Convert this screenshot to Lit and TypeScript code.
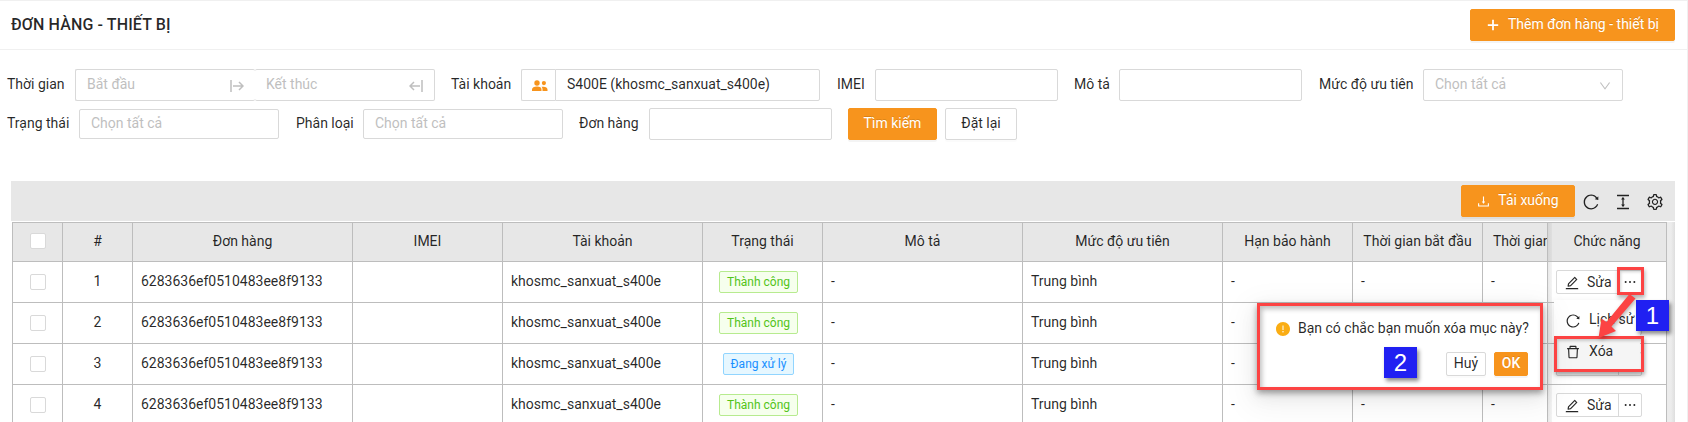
import { LitElement, html, css, svg } from "lit";
import { customElement, property } from "lit/decorators.js";

const ICONS: Record<string, string> = {
  reload:
    "M909.1 209.3l-56.4 44.1C775.8 155.1 656.2 92 521.9 92 290 92 102.3 279.5 102 511.5 101.7 743.7 289.8 932 521.9 932c181.3 0 335.8-115 394.6-276.1 1.5-4.2-.7-8.9-4.9-10.3l-56.7-19.5a8 8 0 00-10.1 4.8c-1.8 5-3.8 10-5.9 14.9-17.3 41-42.1 77.8-73.7 109.4A344.77 344.77 0 01655.9 829c-42.3 17.9-87.4 27-133.8 27-46.5 0-91.5-9.1-133.8-27A341.5 341.5 0 01279 755.2a342.16 342.16 0 01-73.7-109.4c-17.9-42.4-27-87.4-27-133.9s9.1-91.5 27-133.9c17.3-41 42.1-77.8 73.7-109.4 31.6-31.6 68.4-56.4 109.3-73.8 42.3-17.9 87.4-27 133.8-27 46.5 0 91.5 9.1 133.8 27a341.5 341.5 0 01109.3 73.8c9.9 9.9 19.2 20.4 27.8 31.4l-60.2 47a8 8 0 003 14.1l175.6 43c5 1.2 9.9-2.6 9.9-7.7l.8-180.9c-.1-6.6-7.8-10.3-13-6.2z",
  setting:
    "M924.8 625.7l-65.5-56c3.1-19 4.7-38.4 4.7-57.8s-1.6-38.8-4.7-57.8l65.5-56a32.03 32.03 0 009.3-35.2l-.9-2.6a443.74 443.74 0 00-79.7-137.9l-1.8-2.1a32.12 32.12 0 00-35.1-9.5l-81.3 28.9c-30-24.6-63.5-44-99.7-57.6l-15.7-85a32.05 32.05 0 00-25.8-25.7l-2.7-.5c-52.1-9.4-106.9-9.4-159 0l-2.7.5a32.05 32.05 0 00-25.8 25.7l-15.8 85.4a351.86 351.86 0 00-99 57.4l-81.9-29.1a32 32 0 00-35.1 9.5l-1.8 2.1a446.02 446.02 0 00-79.7 137.9l-.9 2.6c-4.5 12.5-.8 26.5 9.3 35.2l66.3 56.6c-3.1 18.8-4.6 38-4.6 57.1 0 19.2 1.5 38.4 4.6 57.1L99 625.5a32.03 32.03 0 00-9.3 35.2l.9 2.6c18.1 50.4 44.9 96.9 79.7 137.9l1.8 2.1a32.12 32.12 0 0035.1 9.5l81.9-29.1c29.8 24.5 63.1 43.9 99 57.4l15.8 85.4a32.05 32.05 0 0025.8 25.7l2.7.5a449.4 449.4 0 00159 0l2.7-.5a32.05 32.05 0 0025.8-25.7l15.7-85a350 350 0 0099.7-57.6l81.3 28.9a32 32 0 0035.1-9.5l1.8-2.1c34.8-41.1 61.6-87.5 79.7-137.9l.9-2.6c4.5-12.3.8-26.3-9.3-35zM788.3 465.9c2.5 15.1 3.8 30.6 3.8 46.1s-1.3 31-3.8 46.1l-6.6 40.1 74.7 63.9a370.03 370.03 0 01-42.6 73.6L721 702.8l-31.4 25.8c-23.9 19.6-50.5 35-79.3 45.8l-38.1 14.3-17.9 97a377.5 377.5 0 01-85 0l-17.9-97.2-37.8-14.5c-28.5-10.8-55-26.2-78.7-45.7l-31.4-25.9-93.4 33.2c-17-22.9-31.2-47.6-42.6-73.6l75.5-64.5-6.5-40c-2.4-14.9-3.7-30.3-3.7-45.5 0-15.3 1.2-30.6 3.7-45.5l6.5-40-75.5-64.5c11.3-26.1 25.6-50.7 42.6-73.6l93.4 33.2 31.4-25.9c23.7-19.5 50.2-34.9 78.7-45.7l37.9-14.3 17.9-97.2c28.1-3.2 56.8-3.2 85 0l17.9 97 38.1 14.3c28.7 10.8 55.4 26.2 79.3 45.8l31.4 25.8 92.8-32.9c17 22.9 31.2 47.6 42.6 73.6L781.8 426l6.5 39.9zM512 326c-97.2 0-176 78.8-176 176s78.8 176 176 176 176-78.8 176-176-78.8-176-176-176zm79.2 255.2A111.6 111.6 0 01512 614c-29.9 0-58-11.7-79.2-32.8A111.6 111.6 0 01400 502c0-29.9 11.7-58 32.8-79.2C454 401.6 482.1 390 512 390c29.9 0 58 11.6 79.2 32.8A111.6 111.6 0 01624 502c0 29.9-11.7 58-32.8 79.2z",
  edit:
    "M257.7 752c2 0 4-.2 6-.5L431.9 722c2-.4 3.9-1.3 5.3-2.8l423.9-423.9a9.96 9.96 0 000-14.1L694.9 114.9c-1.9-1.9-4.4-2.9-7.1-2.9s-5.2 1-7.1 2.9L256.8 538.8c-1.5 1.5-2.4 3.3-2.8 5.3l-29.5 168.2a33.5 33.5 0 009.4 29.8c6.6 6.4 14.9 9.9 23.8 9.9zm67.4-174.4L687.8 215l73.3 73.3-362.7 362.6-88.9 15.7 15.6-89zM880 836H144c-17.7 0-32 14.3-32 32v36c0 4.4 3.6 8 8 8h784c4.4 0 8-3.6 8-8v-36c0-17.7-14.3-32-32-32z",
  trash:
    "M360 184h-8c4.4 0 8-3.6 8-8v8h304v-8c0 4.4 3.6 8 8 8h-8v72h72v-80c0-35.3-28.7-64-64-64H352c-35.3 0-64 28.7-64 64v80h72v-72zm504 72H160c-17.7 0-32 14.3-32 32v32c0 4.4 3.6 8 8 8h60.4l24.7 523c1.6 34.1 29.8 61 63.9 61h454c34.2 0 62.3-26.8 63.9-61l24.7-523H888c4.4 0 8-3.6 8-8v-32c0-17.7-14.3-32-32-32zM731.3 840H292.7l-24.2-512h487l-24.2 512z",
  download:
    "M505.7 661a8 8 0 0012.6 0l112-141.7c4.1-5.2.4-12.9-6.3-12.9h-74.1V168c0-4.4-3.6-8-8-8h-60c-4.4 0-8 3.6-8 8v338.3H400c-6.7 0-10.4 7.7-6.3 12.9l112 141.8zM878 626h-60c-4.4 0-8 3.6-8 8v154H214V634c0-4.4-3.6-8-8-8h-60c-4.4 0-8 3.6-8 8v198c0 17.7 14.3 32 32 32h684c17.7 0 32-14.3 32-32V634c0-4.4-3.6-8-8-8z",
  density:
    "M840 836H184c-4.4 0-8 3.6-8 8v60c0 4.4 3.6 8 8 8h656c4.4 0 8-3.6 8-8v-60c0-4.4-3.6-8-8-8zm0-724H184c-4.4 0-8 3.6-8 8v60c0 4.4 3.6 8 8 8h656c4.4 0 8-3.6 8-8v-60c0-4.4-3.6-8-8-8zM610.8 378c6 0 9.4-7 5.7-11.7L515.7 238.7a7.14 7.14 0 00-11.3 0L403.6 366.3a7.23 7.23 0 005.7 11.7H476v268h-62.8c-6 0-9.4 7-5.7 11.7l100.8 127.5c2.9 3.7 8.5 3.7 11.3 0l100.8-127.5c3.7-4.7.4-11.7-5.7-11.7H548V378h62.8z",
  down:
    "M884 256h-75c-5.1 0-9.9 2.5-12.9 6.6L512 654.2 227.9 262.6c-3-4.1-7.8-6.6-12.9-6.6h-75c-6.5 0-10.3 7.4-6.5 12.7l352.6 486.1c12.8 17.6 39 17.6 51.7 0l352.6-486.1c3.9-5.3.1-12.7-6.4-12.7z",
  warning:
    "M512 64C264.6 64 64 264.6 64 512s200.6 448 448 448 448-200.6 448-448S759.4 64 512 64zm-32 232c0-4.4 3.6-8 8-8h48c4.4 0 8 3.6 8 8v272c0 4.4-3.6 8-8 8h-48c-4.4 0-8-3.6-8-8V296zm32 440a48.01 48.01 0 010-96 48.01 48.01 0 010 96z",
  plus: "M456 180h112v276h276v112H568v276H456V568H180V456h276z",
  dots:
    "M170 511a64 64 0 10128 0 64 64 0 10-128 0zm278 0a64 64 0 10128 0 64 64 0 10-128 0zm278 0a64 64 0 10128 0 64 64 0 10-128 0z",
};

@customElement("ui-icon")
class UiIcon extends LitElement {
  @property() name = "";
  @property({ type: Number }) size = 14;
  static styles = css`
    :host { display: inline-flex; flex: none; }
    svg { display: block; fill: currentColor; }
  `;
  render() {
    return html`<svg width=${this.size} height=${this.size} viewBox="64 64 896 896">
      ${svg`<path d=${ICONS[this.name] ?? ""}></path>`}
    </svg>`;
  }
}

@customElement("row-actions")
class RowActions extends LitElement {
  static styles = css`
    :host { display: flex; width: 86px; height: 24px; box-sizing: border-box; border: 1px solid #d9d9d9; border-radius: 2px; background: #fff; }
    .edit { display: flex; align-items: center; width: 62px; box-sizing: border-box; border-right: 1px solid #d9d9d9; padding-left: 8px; gap: 8px; line-height: 20px; }
    .edit ui-icon { padding-top: 2px; }
    .more { flex: 1; display: flex; align-items: center; justify-content: center; padding-top: 1px; }
  `;
  render() {
    return html`<div class="edit"><ui-icon name="edit"></ui-icon><span>Sửa</span></div>
      <div class="more"><ui-icon name="dots"></ui-icon></div>`;
  }
}

interface Order { id: string; account: string; done: boolean; priority: string; }

const HEADERS = ["#", "Đơn hàng", "IMEI", "Tài khoản", "Trạng thái", "Mô tả", "Mức độ ưu tiên", "Hạn bảo hành", "Thời gian bắt đầu", "Thời gian kết thúc"];
const ORDERS: Order[] = [true, true, false, true].map((done) => ({
  id: "6283636ef0510483ee8f9133",
  account: "khosmc_sanxuat_s400e",
  done,
  priority: "Trung bình",
}));

@customElement("app-root")
class AppRoot extends LitElement {
  static styles = css`
    :host {
      display: block; position: relative; box-sizing: border-box; width: 1688px; height: 422px; overflow: hidden;
      border-top: 1px solid #f0f0f0; border-right: 1px solid #f0f0f0; background: #fff;
      font: 14px/22px Roboto, sans-serif; color: rgba(0, 0, 0, 0.85); white-space: nowrap;
    }
    * { box-sizing: border-box; }
    header { display: flex; align-items: center; justify-content: space-between; height: 49px; padding: 0 12px 0 11px; border-bottom: 1px solid #f0f0f0; }
    h1 { margin: 0 0 1px; font-size: 16px; font-weight: 500; line-height: 24px; letter-spacing: 0.12px; }
    .btn { display: flex; align-items: center; justify-content: center; height: 32px; border: 1px solid #d9d9d9; border-radius: 2px; background: #fff; box-shadow: 0 2px 0 rgba(0, 0, 0, 0.016); padding-bottom: 2px; }
    .primary { background: #f7941d; border-color: #f7941d; color: #fff; text-shadow: 0 -1px 0 rgba(0, 0, 0, 0.12); box-shadow: 0 2px 0 rgba(0, 0, 0, 0.045); }
    .add { width: 205px; gap: 8px; margin-bottom: 1px; font-weight: 400; }
    .add ui-icon, .download ui-icon { padding-top: 2px; }
    .filters { padding: 19px 0 0 7px; height: 131px; }
    .line { display: flex; align-items: center; height: 32px; margin-bottom: 7px; }
    .label { flex: none; padding-bottom: 2px; }
    .box { flex: none; display: flex; align-items: center; height: 32px; border: 1px solid #d9d9d9; border-radius: 2px; padding: 0 11px 2px; color: #bfbfbf; }
    .short { height: 30px; }
    .half { width: 180px; justify-content: space-between; }
    .start { border-right: 0; }
    .end { border-left: 0; }
    .half svg { display: block; margin-top: 3px; }
    .users { display: flex; align-items: center; justify-content: center; width: 34px; height: 32px; border: 1px solid #d9d9d9; border-right: 0; border-radius: 2px 0 0 2px; }
    .users svg { margin: 2px 0 0 3px; }
    .account { width: 265px; color: rgba(0, 0, 0, 0.85); border-radius: 0 2px 2px 0; }
    .select { justify-content: space-between; }
    .select ui-icon { padding-top: 3px; }
    .toolbar { display: flex; align-items: center; height: 40px; margin: 0 12px 0 11px; background: #e7e7e7; padding-right: 12px; }
    .download { width: 114px; gap: 8px; margin-left: auto; margin-right: 8px; }
    .tool { margin-right: 16px; margin-top: 2px; color: #222; }
    .tool:last-child { margin-right: 0; }
    .table { display: flex; margin: 1px 12px 0 11px; background: linear-gradient(90deg, #fff 1656px, #ececec 1656px, #ececec 1660px, #dedede); }
    .main { flex: none; width: 1536px; overflow: hidden; border-left: 1px solid #bdbdbd; border-right: 1px solid #bdbdbd; margin-left: 1px; }
    .row { display: grid; grid-template-columns: 50px 70px 220px 150px 200px 120px 200px 200px 130px 130px 130px; height: 41px; }
    .row.head, .cell.head { height: 40px; background: #e7e7e7; border-top: 1px solid #bdbdbd; }
    .cell { display: flex; align-items: center; border-right: 1px solid #bdbdbd; border-bottom: 1px solid #bdbdbd; padding: 0 8px 2px; }
    .head .cell, .mid { justify-content: center; }
    .head .cell { padding-bottom: 3px; }
    .head .cell:last-child { justify-content: flex-start; padding-left: 10px; }
    .check { width: 16px; height: 16px; border: 1px solid #d9d9d9; border-radius: 2px; background: #fff; margin-top: 1px; }
    .tag { font-size: 12px; line-height: 20px; padding: 0 7px; border: 1px solid #b7eb8f; border-radius: 2px; background: #f6ffed; color: #52c41a; margin: 1px 8px 0 0; }
    .tag.blue { border-color: #91d5ff; background: #e6f7ff; color: #1890ff; }
    .fixed { flex: none; width: 119px; background: linear-gradient(90deg, #e9e9e9, #f4f4f4 4px, #fff 4px); }
    .fixed .cell { height: 41px; padding: 0 0 1px 8px; }
    .fixed .cell.head { height: 40px; justify-content: center; padding: 0 0 3px 0; background: linear-gradient(90deg, #d6d6d6, #dfdfdf 4px, #e7e7e7 4px); }
    .popover { position: absolute; left: 1257px; top: 302px; width: 286px; height: 87px; padding: 11px 12px 0 16px; border: 3px solid #fc4343; background: #fff;
      box-shadow: 0 3px 6px rgba(0, 0, 0, 0.35), inset 2px 3px 5px rgba(0, 0, 0, 0.25), 0 6px 16px rgba(0, 0, 0, 0.08), 0 9px 28px 8px rgba(0, 0, 0, 0.05); }
    .ask { display: flex; align-items: center; gap: 8px; }
    .ask ui-icon { color: #faad14; padding-top: 2px; }
    .confirm { display: flex; justify-content: flex-end; gap: 8px; margin-top: 13px; }
    .confirm .btn { height: 24px; }
    .no { width: 40px; }
    .ok { width: 34px; font-weight: 500; }
    .badge { position: absolute; width: 33px; height: 31px; background: #2020f2; color: #fff; font: 24px/31px "Liberation Sans", sans-serif; text-align: center; box-shadow: 2px 3px 4px rgba(0, 0, 0, 0.45); }
    .b1 { left: 1636px; top: 299px; }
    .b2 { left: 1384px; top: 346px; }
    .menu { position: absolute; left: 1554px; top: 299px; width: 86px; height: 71px; background: #fff; box-shadow: 0 3px 8px rgba(0, 0, 0, 0.1); }
    .item { display: flex; align-items: center; gap: 9px; height: 36px; padding: 2px 0 0 12px; }
    .item ui-icon { padding-top: 3px; }
    .item.hot { height: 35px; background: #f5f5f5; padding-bottom: 8px; }
    .mark { position: absolute; border: 3px solid #fc4343; box-shadow: 1px 3px 4px rgba(0, 0, 0, 0.3), inset 1px 2px 3px rgba(0, 0, 0, 0.18); }
    .m1 { left: 1617px; top: 266px; width: 27px; height: 28px; }
    .m2 { left: 1554px; top: 335px; width: 90px; height: 36px; }
    .arrow { position: absolute; left: 1590px; top: 288px; filter: drop-shadow(1px 2px 2px rgba(0, 0, 0, 0.3)); }
    .w7 { width: 183px; } .w8 { width: 200px; }
    .g10 { margin-left: 10px; }
    .g16 { margin-left: 16px; } .g17 { margin-left: 17px; }
    .l1 { width: 58px; } .l2 { width: 60px; } .l3 { width: 28px; } .l4 { width: 35px; } .l5 { width: 94px; }
    .l6 { width: 62px; } .l7 { width: 57px; } .l8 { width: 60px; }
    .find { width: 89px; margin-left: 16px; } .reset { width: 72px; margin-left: 8px; }
  `;

  render() {
    return html`
      <header>
        <h1>ĐƠN HÀNG - THIẾT BỊ</h1>
        <div class="btn primary add"><ui-icon name="plus"></ui-icon><span>Thêm đơn hàng - thiết bị</span></div>
      </header>
      <section class="filters">
        <div class="line">
          <span class="label l1">Thời gian</span>
          <span class="box half start g10">Bắt đầu
            <svg width="14" height="12" fill="none" stroke="currentColor" stroke-width="1.5"><path d="M1 0v12M3 6h10M9 2l4 4-4 4"></path></svg></span>
          <span class="box half end">Kết thúc
            <svg width="14" height="12" fill="none" stroke="currentColor" stroke-width="1.5"><path d="M13 0v12M11 6H1M5 2L1 6l4 4"></path></svg></span>
          <span class="label l2 g16">Tài khoản</span>
          <span class="users g10"><svg width="16" height="12" viewBox="0 0 16 12" fill="#f7941d">
            <circle cx="5" cy="3" r="2.7"></circle><circle cx="11.9" cy="3.1" r="2.1"></circle>
            <path d="M0 11V9.500C0 7.500 2 6.500 5 6.500s4.500 1 4.500 3V11zM10.500 11V9.500c0-1.200-.4-2-1-2.700 3.500-.6 6 .4 6 2.700V11z"></path></svg></span>
          <span class="box account">S400E (khosmc_sanxuat_s400e)</span>
          <span class="label l3 g17">IMEI</span><span class="box w7 g10"></span>
          <span class="label l4 g16">Mô tả</span><span class="box w7 g10"></span>
          <span class="label l5 g17">Mức độ ưu tiên</span>
          <span class="box select w8 g10">Chọn tất cả<ui-icon name="down" size="12"></ui-icon></span>
        </div>
        <div class="line">
          <span class="label l6">Trạng thái</span><span class="box short w8 g10">Chọn tất cả</span>
          <span class="label l7 g17">Phân loại</span><span class="box short w8 g10">Chọn tất cả</span>
          <span class="label l8 g16">Đơn hàng</span><span class="box w7 g10"></span>
          <span class="btn primary find">Tìm kiếm</span><span class="btn reset">Đặt lại</span>
        </div>
      </section>
      <div class="toolbar">
        <span class="btn primary download"><ui-icon name="download" size="13"></ui-icon><span>Tải xuống</span></span>
        <ui-icon class="tool" name="reload" size="16"></ui-icon>
        <ui-icon class="tool" name="density" size="16"></ui-icon>
        <ui-icon class="tool" name="setting" size="16"></ui-icon>
      </div>
      <div class="table">
        <div class="main">
          <div class="row head">
            <div class="cell"><span class="check"></span></div>
            ${HEADERS.map((h) => html`<div class="cell">${h}</div>`)}
          </div>
          ${ORDERS.map(
            (o, i) => html`<div class="row">
              <div class="cell mid"><span class="check"></span></div>
              <div class="cell mid">${i + 1}</div>
              <div class="cell">${o.id}</div>
              <div class="cell"></div>
              <div class="cell">${o.account}</div>
              <div class="cell mid"><span class="tag ${o.done ? "" : "blue"}">${o.done ? "Thành công" : "Đang xử lý"}</span></div>
              <div class="cell">-</div>
              <div class="cell">${o.priority}</div>
              <div class="cell">-</div>
              <div class="cell">-</div>
              <div class="cell">-</div>
            </div>`
          )}
        </div>
        <div class="fixed">
          <div class="cell head">Chức năng</div>
          ${ORDERS.map(() => html`<div class="cell"><row-actions></row-actions></div>`)}
        </div>
      </div>

      <div class="menu">
        <div class="item"><ui-icon name="reload"></ui-icon>Lịch sử</div>
        <div class="item hot"><ui-icon name="trash"></ui-icon>Xóa</div>
      </div>
      <div class="popover">
        <div class="ask"><ui-icon name="warning"></ui-icon>Bạn có chắc bạn muốn xóa mục này?</div>
        <div class="confirm"><span class="btn no">Huỷ</span><span class="btn primary ok">OK</span></div>
      </div>
      <div class="mark m1"></div>
      <div class="mark m2"></div>
      <svg class="arrow" width="50" height="56" viewBox="1590 289 50 56" fill="#fc4343">
        <path d="M1629.500 294L1635.500 298.500L1611.500 326.500L1616 331L1598.500 338L1601.500 318.500L1606.500 322Z"></path>
      </svg>
      <div class="badge b1">1</div>
      <div class="badge b2">2</div>
    `;
  }
}
